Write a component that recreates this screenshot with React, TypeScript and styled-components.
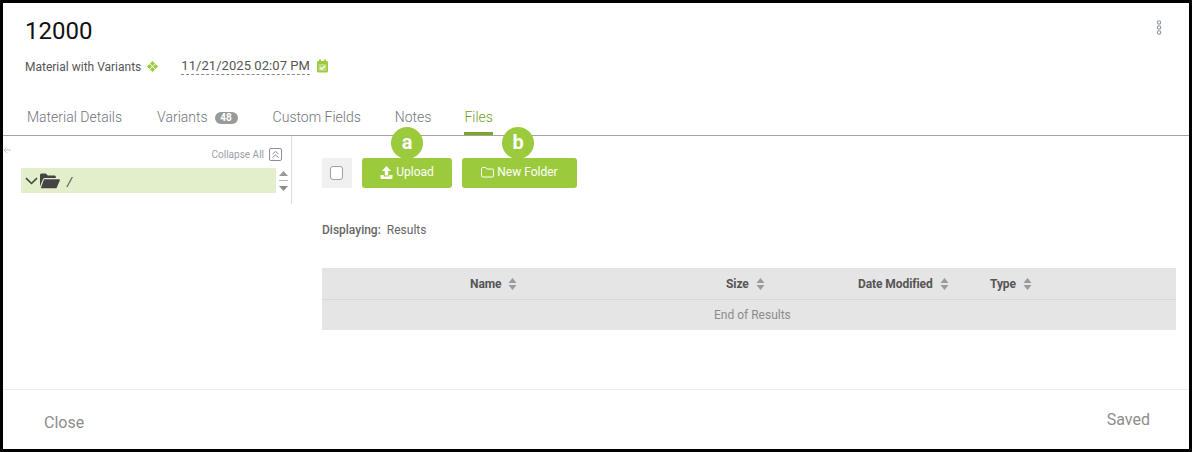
import React from "react";
import styled, { createGlobalStyle } from "styled-components";

const Global = createGlobalStyle`
  html, body { margin: 0; padding: 0; background: #000; }
  body { font-family: Roboto, "Liberation Sans", sans-serif; }
`;

const Frame = styled.div`
  box-sizing: border-box;
  width: 1192px;
  height: 452px;
  border: 3px solid #000;
  background: #fff;
  display: flex;
  flex-direction: column;
  overflow: hidden;
`;

const Header = styled.header`
  position: relative;
  height: 97px;
  padding: 13px 0 0 22px;
  box-sizing: border-box;
`;

const Title = styled.h1`
  margin: 0;
  font-size: 24px;
  line-height: 30px;
  font-weight: 400;
  color: #111;
`;

const Meta = styled.div`
  display: flex;
  align-items: center;
  margin-top: 10px;
  height: 21px;
`;

const MetaLabel = styled.span`
  font-size: 12px;
  color: #555;
`;

const DateText = styled.span`
  margin-left: 23px;
  font-size: 13px;
  line-height: 16px;
  letter-spacing: 0.06px;
  color: #555;
  border-bottom: 1px dashed #888;
`;

const MoreButton = styled.button`
  position: absolute;
  top: 17px;
  right: 27px;
  padding: 0;
  border: 0;
  background: none;
  line-height: 0;
`;

const Tabs = styled.nav`
  display: flex;
  padding-left: 24px;
  height: 35px;
  border-bottom: 1px solid #a3a3a3;
`;

const Tab = styled.div<{ $active?: boolean; $gap: number }>`
  display: flex;
  align-items: flex-start;
  gap: 7px;
  height: 35px;
  margin-right: ${(p) => p.$gap}px;
  padding-top: 9px;
  box-sizing: border-box;
  font-size: 14px;
  font-weight: 300;
  line-height: 17px;
  color: ${(p) => (p.$active ? "#6f9e22" : "#70757c")};
  border-bottom: ${(p) => (p.$active ? "3px solid #7ba428" : "0")};
`;

const Count = styled.span`
  margin-top: 3px;
  width: 23px;
  height: 12px;
  border-radius: 6px;
  background: #9a9a9a;
  color: #fff;
  font-size: 10px;
  line-height: 12px;
  font-weight: 700;
  text-align: center;
`;

const Body = styled.main`
  flex: 1;
  display: flex;
  align-items: flex-start;
  min-height: 0;
`;

const TreePanel = styled.aside`
  box-sizing: border-box;
  width: 289px;
  height: 68px;
  border-right: 1px solid #dedede;
  padding-top: 8px;
  position: relative;
`;

const BackArrow = styled.span`
  position: absolute;
  left: 0;
  top: 10px;
  line-height: 0;
`;

const CollapseRow = styled.div`
  display: flex;
  justify-content: flex-end;
  align-items: center;
  gap: 5px;
  height: 24px;
  padding: 0 9px 4px 0;
  box-sizing: border-box;
  font-size: 10px;
  color: #9aa0a8;
`;

const CollapseBox = styled.span`
  width: 11px;
  height: 11px;
  border: 1px solid #8b9098;
  border-radius: 2px;
  line-height: 0;
  display: flex;
  align-items: center;
  justify-content: center;
`;

const TreeRow = styled.div`
  display: flex;
  align-items: center;
  margin-left: 18px;
`;

const TreeItem = styled.div`
  width: 255px;
  height: 25px;
  background: #e3efca;
  display: flex;
  align-items: center;
  padding-left: 4px;
  box-sizing: border-box;
  font-size: 13px;
  font-style: italic;
  color: #444;
`;

const FolderSlash = styled.span`
  margin-left: 7px;
  margin-top: 2px;
`;

const Scroller = styled.div`
  margin-left: 2px;
  line-height: 0;
`;

const Content = styled.section`
  flex: 1;
  padding: 22px 13px 0 30px;
`;

const Toolbar = styled.div`
  display: flex;
  align-items: center;
  gap: 10px;
`;

const CheckWrap = styled.div`
  width: 30px;
  height: 30px;
  background: #f0f0f0;
  border-radius: 2px;
  display: flex;
  align-items: center;
  justify-content: center;
`;

const CheckBox = styled.span`
  width: 11px;
  height: 12px;
  margin-right: 1px;
  background: #fff;
  border: 1px solid #a0a0a0;
  border-radius: 3px;
`;

const Action = styled.button<{ $w: number }>`
  position: relative;
  width: ${(p) => p.$w}px;
  height: 30px;
  border: 0;
  border-radius: 3px;
  background: #9bcb3c;
  color: #fff;
  font: 400 12px Roboto, sans-serif;
  display: flex;
  align-items: center;
  justify-content: center;
  gap: 3px;
  padding: 0 0 2px;
`;

const Marker = styled.span<{ $left: number }>`
  position: absolute;
  left: ${(p) => p.$left}px;
  top: -31px;
  width: 32px;
  height: 32px;
  border-radius: 50%;
  background: #9bcb3c;
  color: #fff;
  font-size: 20px;
  font-weight: 700;
  line-height: 31px;
  text-align: center;
`;

const Displaying = styled.div`
  margin-top: 34px;
  height: 16px;
  font-size: 12px;
  line-height: 16px;
  color: #666;
  strong { font-weight: 500; margin-right: 6px; }
`;

const Table = styled.div`
  margin-top: 30px;
  background: #e5e5e5;
  width: 854px;
`;

const HeadRow = styled.div`
  display: grid;
  grid-template-columns: 344px 132px 132px 1fr;
  height: 31px;
  border-bottom: 1px solid #d8d8d8;
`;

const HeadCell = styled.div<{ $ml: number }>`
  display: flex;
  align-items: center;
  gap: 7px;
  white-space: nowrap;
  font-size: 12px;
  font-weight: 700;
  letter-spacing: -0.08px;
  color: #555;
  padding-left: ${(p) => p.$ml}px;
  svg { flex: none; }
`;

const EndRow = styled.div`
  height: 30px;
  line-height: 30px;
  padding-left: 392px;
  font-size: 12px;
  color: #8c8c8c;
`;

const Footer = styled.footer`
  margin-top: auto;
  height: 60px;
  border-top: 1px solid #ececec;
  display: flex;
  justify-content: space-between;
  padding: 20px 39px 0 41px;
  box-sizing: border-box;
  font-size: 16px;
  color: #8d8d8d;
`;

const FooterClose = styled.span`
  margin-top: 3px;
`;

const Sort = () => (
  <svg width="9" height="12" viewBox="0 0 9 12" fill="#9a9a9a">
    <path d="M4.500 0 8.500 5H.5z" />
    <path d="M.5 7h8l-4 5z" />
  </svg>
);

export default function App() {
  return (
    <Frame>
      <Global />
      <Header>
        <Title>12000</Title>
        <Meta>
          <MetaLabel>Material with Variants</MetaLabel>
          <svg style={{ marginLeft: 6 }} width="11" height="11" viewBox="0 0 11 11" fill="#9bcb3c">
            <path d="M5.500 0 8 2.500 5.500 5 3 2.500zM2.500 3 5 5.500 2.500 8 0 5.500zM8.500 3 11 5.500 8.500 8 6 5.500zM5.500 6 8 8.500 5.500 11 3 8.500z" />
          </svg>
          <DateText>11/21/2025 02:07 PM</DateText>
          <svg style={{ marginLeft: 6, marginTop: -2 }} width="13" height="14" viewBox="0 0 13 14">
            <path d="M1 3.500C1 2.600 1.600 2 2.500 2h8c.9 0 1.500.6 1.500 1.500v8.500c0 .9-.6 1.500-1.500 1.500h-8c-.9 0-1.500-.6-1.500-1.500z" fill="#9bcb3c" />
            <rect x="3" y="0.500" width="2" height="3" fill="#9bcb3c" />
            <rect x="8" y="0.500" width="2" height="3" fill="#9bcb3c" />
            <rect x="2.500" y="5" width="8" height="7" fill="#b9dc74" />
            <path d="M4 8.500 5.800 10.200 9 7" stroke="#fff" strokeWidth="1.200" fill="none" />
          </svg>
        </Meta>
        <MoreButton aria-label="More">
          <svg width="6" height="15" viewBox="0 0 6 15" fill="none" stroke="#8f98a4" strokeWidth="1.100">
            <circle cx="3" cy="2.500" r="1.700" />
            <circle cx="3" cy="7.500" r="1.700" />
            <circle cx="3" cy="12.500" r="1.700" />
          </svg>
        </MoreButton>
      </Header>
      <Tabs>
        <Tab $gap={35}>Material Details</Tab>
        <Tab $gap={35}>Variants<Count>48</Count></Tab>
        <Tab $gap={34}>Custom Fields</Tab>
        <Tab $gap={33}>Notes</Tab>
        <Tab $active $gap={0}>Files</Tab>
      </Tabs>
      <Body>
        <TreePanel>
          <BackArrow>
            <svg width="8" height="8" viewBox="0 0 8 8" fill="none" stroke="#c4c8cc" strokeWidth="1">
              <path d="M8 4H1M4 1 1 4l3 3" />
            </svg>
          </BackArrow>
          <CollapseRow>
            Collapse All
            <CollapseBox>
              <svg width="9" height="9" viewBox="0 0 9 9" fill="none" stroke="#8b9098" strokeWidth="1">
                <path d="M1.500 4 4.500 1.500 7.500 4M1.500 7.500 4.500 5 7.500 7.500" />
              </svg>
            </CollapseBox>
          </CollapseRow>
          <TreeRow>
            <TreeItem>
              <svg width="13" height="8" viewBox="0 0 13 8" fill="none" stroke="#444" strokeWidth="1.600">
                <path d="M1 1.200 6.500 6.500 12 1.200" />
              </svg>
              <svg style={{ marginLeft: 2 }} width="20" height="16" viewBox="0 0 20 16" fill="#444">
                <path d="M0 2.200C0 1 .8.500 1.600.500h4.200l2 2h6.600c.9 0 1.400.6 1.400 1.400V5H5.200C4 5 3.200 5.600 2.800 6.600L0 13.400z" />
                <path d="M4 6.200h15c.7 0 1.100.6.800 1.200l-3 7c-.2.5-.7.9-1.300.9H.8z" />
              </svg>
              <FolderSlash>/</FolderSlash>
            </TreeItem>
            <Scroller>
              <svg width="11" height="24" viewBox="0 0 11 24">
                <path d="M1 7 5.500 2 10 7z" fill="#9a9a9a" />
                <rect x="1" y="11" width="9" height="1" fill="#b8b8b8" />
                <path d="M1 17h9l-4.500 5z" fill="#8d8d8d" />
              </svg>
            </Scroller>
          </TreeRow>
        </TreePanel>
        <Content>
          <Toolbar>
            <CheckWrap><CheckBox /></CheckWrap>
            <Action $w={90}>
              <Marker $left={29}>a</Marker>
              <svg width="13" height="13" viewBox="0 0 13 13" fill="#fff">
                <path d="M6.500 0 11 5H8.200v4.500H4.800V5H2z" />
                <path d="M.5 9h3.300v1.500h5.400V9h3.300v2.500c0 .8-.5 1.500-1.300 1.500H1.800C1 13 .5 12.300.5 11.500z" />
              </svg>
              Upload
            </Action>
            <Action $w={115}>
              <Marker $left={40}>b</Marker>
              <svg width="13" height="11" viewBox="0 0 13 11" fill="none" stroke="#fff" strokeWidth="1">
                <path d="M.5 2c0-.8.500-1.500 1.200-1.500h3l1.300 1.500h5.300c.7 0 1.200.5 1.200 1.200v5.600c0 .9-.5 1.200-1.200 1.200H1.700C1 10 .5 9.500.5 8.800z" />
              </svg>
              New Folder
            </Action>
          </Toolbar>
          <Displaying><strong>Displaying:</strong>Results</Displaying>
          <Table>
            <HeadRow>
              <HeadCell $ml={148}>Name <Sort /></HeadCell>
              <HeadCell $ml={60}>Size <Sort /></HeadCell>
              <HeadCell $ml={60}>Date Modified <Sort /></HeadCell>
              <HeadCell $ml={60}>Type <Sort /></HeadCell>
            </HeadRow>
            <EndRow>End of Results</EndRow>
          </Table>
        </Content>
      </Body>
      <Footer>
        <FooterClose>Close</FooterClose>
        <span>Saved</span>
      </Footer>
    </Frame>
  );
}
